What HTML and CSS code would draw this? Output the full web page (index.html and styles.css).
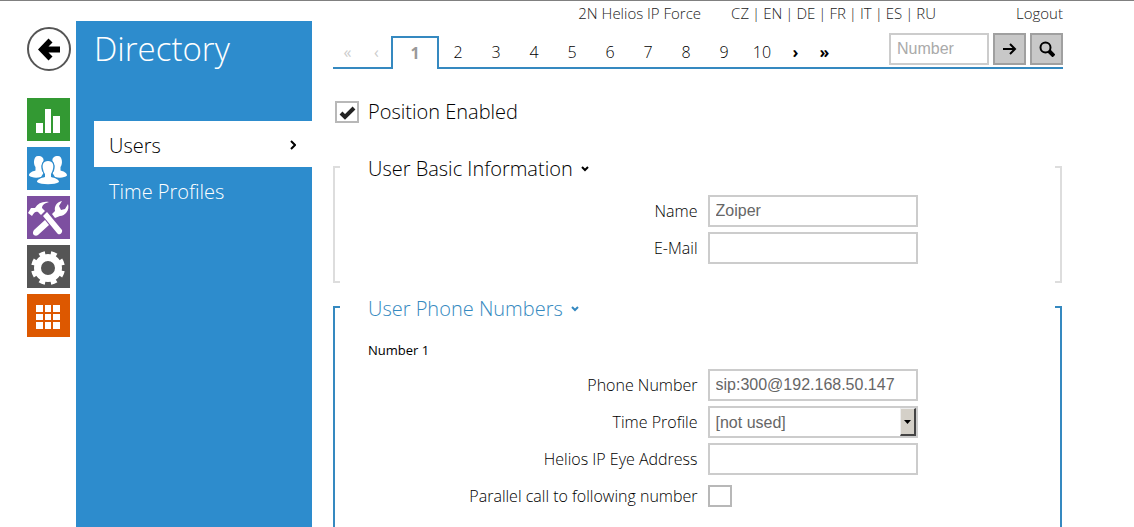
FILE: index.html
```
<!DOCTYPE html>
<html lang="en">
<head>
    <meta charset="UTF-8">
    <meta name="viewport" content="width=device-width, initial-scale=1.0">
    <title>2N Helios IP Force - Directory</title>
    <link rel="stylesheet" href="styles.css">
</head>
<body>
    <!-- Icon rail -->
    <nav class="rail" aria-label="Sections">
        <a class="back" href="#" aria-label="Back">
            <svg viewBox="0 0 44 44"><circle cx="22" cy="22" r="21" fill="#fff" stroke="#555" stroke-width="2"/><path d="M11 22.500 21.500 11.500 25.500 15.500 21.500 19.500H33V25.500H21.500L25.500 29.500 21.500 33.500Z"/></svg>
        </a>
        <a class="tile green" href="#" aria-label="Status">
            <svg viewBox="0 0 43 43"><path d="M9 25h7v10H9zM18 11h6v24h-6zM26 18h7v17h-7z"/></svg>
        </a>
        <a class="tile blue" href="#" aria-label="Directory">
            <svg viewBox="0 0 43 43">
                <path d="M11 9C15 9 17 11 16.500 14C14 17 14 20 15 24L16.500 26L14 30C9 31.500 4 30.500 2 28.500C2 26 5 24.500 8.500 23.500V20C6 17 6.500 9 11 9Z"/>
                <path d="M31 9C27 9 25 11 25.500 14C28 17 28 20 27 24L25.500 26L28 30C33 31.500 38 30.500 40 28.500C40 26 37 24.500 33.500 23.500V20C36 17 35.500 9 31 9Z"/>
                <path class="front" d="M21 14C26 14 27 18 26 22C25.500 24 24.500 26 24 27V30C28 31 32 32.500 32 35C28 38 14 38 10 35C10 32.500 14 31 18 30V27C17 26 16.500 24 16 22C15 18 16 14 21 14Z"/>
            </svg>
        </a>
        <a class="tile purple" href="#" aria-label="Hardware">
            <svg viewBox="0 0 43 43">
                <path d="M1 17 4 12H8C11 7 16 5 22 6C18 7 15 9 15 12L18 15L14 19L11 16C9 15 7 16 5 20Z"/>
                <path d="M16 20 20 16 35 34C36 37 32 40 30 37Z"/>
                <path d="M25 18 28 15C27 10 30 6 35 5L32 10L34 14L38 13L41 8C43 14 38 20 33 20L28 22ZM18 24 22 29 11 39C8 41 4 38 7 34Z"/>
            </svg>
        </a>
        <a class="tile gray" href="#" aria-label="Services">
            <svg viewBox="0 0 43 43" fill="none" stroke="#fff">
                <circle cx="21" cy="23" r="10.500" stroke-width="7"/>
                <circle cx="21" cy="23" r="15" stroke-width="4" pathLength="80" stroke-dasharray="5 5" stroke-dashoffset="-2.500"/>
            </svg>
        </a>
        <a class="tile orange" href="#" aria-label="System">
            <svg viewBox="0 0 43 43"><path d="M9 11h7v7H9zM18 11h6v7h-6zM26 11h7v7h-7zM9 20h7v6H9zM18 20h6v6h-6zM26 20h7v6h-7zM9 28h7v7H9zM18 28h6v7h-6zM26 28h7v7h-7z"/></svg>
        </a>
    </nav>

    <!-- Directory menu -->
    <aside class="sidebar">
        <h1>Directory</h1>
        <a class="menu-item active" href="#">Users
            <svg class="arrow" viewBox="0 0 6 10"><path d="M1 1 5 5 1 9"/></svg>
        </a>
        <a class="menu-item" href="#">Time Profiles</a>
    </aside>

    <main>
        <header class="topbar">
            <span>2N Helios IP Force</span>
            <span class="languages"><a href="#">CZ</a>|<a href="#">EN</a>|<a href="#">DE</a>|<a href="#">FR</a>|<a href="#">IT</a>|<a href="#">ES</a>|<a href="#">RU</a></span>
            <a href="#">Logout</a>
        </header>

        <div class="pager">
            <nav class="pages" aria-label="Positions">
                <a class="step off" href="#">«</a>
                <a class="step off" href="#">‹</a>
                <a class="current" href="#">1</a>
                <a href="#">2</a>
                <a href="#">3</a>
                <a href="#">4</a>
                <a href="#">5</a>
                <a href="#">6</a>
                <a href="#">7</a>
                <a href="#">8</a>
                <a href="#">9</a>
                <a href="#">10</a>
                <a class="step" href="#">›</a>
                <a class="step" href="#">»</a>
            </nav>
            <form class="search">
                <input type="text" placeholder="Number" aria-label="Number">
                <button type="button" aria-label="Go">
                    <svg viewBox="0 0 16 16"><path d="M1 8h12M8 3l5 5-5 5"/></svg>
                </button>
                <button type="button" aria-label="Search">
                    <svg viewBox="0 0 16 16"><circle cx="6.500" cy="6.500" r="5"/><path d="M10 10l5 5" stroke-width="4"/></svg>
                </button>
            </form>
        </div>

        <label class="enabled"><input type="checkbox" checked>Position Enabled</label>

        <section class="group">
            <h2><button type="button">User Basic Information <svg viewBox="0 0 8 6"><path d="M1 1 4 4 7 1"/></svg></button></h2>
            <div class="row">
                <label for="name">Name</label>
                <input type="text" id="name" value="Zoiper">
            </div>
            <div class="row">
                <label for="email">E-Mail</label>
                <input type="text" id="email">
            </div>
        </section>

        <section class="group open">
            <h2><button type="button">User Phone Numbers <svg viewBox="0 0 8 6"><path d="M1 1 4 4 7 1"/></svg></button></h2>
            <h3>Number 1</h3>
            <div class="row">
                <label for="phone">Phone Number</label>
                <input type="text" id="phone" value="sip:300@192.168.50.147">
            </div>
            <div class="row">
                <label for="profile">Time Profile</label>
                <span class="select">
                    <select id="profile"><option>[not used]</option></select>
                    <span class="drop"><svg viewBox="0 0 7 4"><path d="M0 0h7L3.500 4z"/></svg></span>
                </span>
            </div>
            <div class="row">
                <label for="eye">Helios IP Eye Address</label>
                <input type="text" id="eye">
            </div>
            <div class="row">
                <label for="parallel">Parallel call to following number</label>
                <input type="checkbox" id="parallel">
            </div>
        </section>
    </main>
</body>
</html>
```
FILE: styles.css
```
* {
    box-sizing: border-box;
}

body {
    margin: 0;
    min-height: 100vh;
    display: flex;
    border-top: 1px solid #808080;
    background: #fff;
    color: #000;
    font-family: "Open Sans", "Noto Sans", sans-serif;
    font-size: 16px;
    font-weight: 300;
}

a {
    color: inherit;
    text-decoration: none;
}

svg {
    display: block;
}

/* Icon rail */
.rail {
    flex: none;
    width: 76px;
    padding: 26px 5px 0 27px;
    display: flex;
    flex-direction: column;
    gap: 6px;
}

.back {
    width: 44px;
    height: 44px;
    margin-bottom: 21px;
}

.tile {
    width: 43px;
    height: 43px;
    fill: #fff;
}

.front {
    stroke: #2d8ccd;
    stroke-width: 2;
    paint-order: stroke;
}

.green {
    background: #339933;
}

.blue {
    background: #2d8ccd;
}

.purple {
    background: #7d4fa0;
}

.gray {
    background: #555;
}

.orange {
    background: #dd5800;
}

/* Directory menu */
.sidebar {
    flex: none;
    width: 236px;
    margin-top: 20px;
    padding-left: 18px;
    background: #2d8ccd;
    color: #fff;
}

h1 {
    margin: 0 0 44px;
    font-size: 33px;
    font-weight: 300;
    line-height: 56px;
}

.menu-item {
    display: flex;
    align-items: center;
    justify-content: space-between;
    height: 46px;
    padding: 2px 16px 0 15px;
    font-size: 20px;
}

.menu-item.active {
    background: #fff;
    color: #000;
}

.arrow {
    width: 6px;
    height: 10px;
    fill: none;
    stroke: #000;
    stroke-width: 2;
}

/* Main column */
main {
    flex: 1;
    display: flex;
    flex-direction: column;
    margin: 0 71px 0 21px;
}

.topbar {
    display: flex;
    justify-content: flex-end;
    height: 32px;
    font-size: 15px;
    line-height: 24px;
    color: #222;
}

.languages {
    display: flex;
    gap: 3px;
    margin: 0 80px 0 30px;
}

/* Pager */
.pager {
    display: flex;
    justify-content: space-between;
    height: 36px;
    border-bottom: 2px solid #3589c0;
}

.pages {
    display: flex;
    height: 33px;
    margin-top: 3px;
    line-height: 32px;
    text-align: center;
}

.pages a {
    width: 38px;
}

.pages .step {
    width: 29px;
    font-weight: 700;
}

.pages .off {
    color: #ccc;
    font-weight: 400;
}

.pages .current {
    width: 48px;
    height: 33px;
    border: 2px solid #3589c0;
    border-bottom: 0;
    background: #fff;
    color: #999;
    font-weight: 700;
    line-height: 30px;
}

.search {
    display: flex;
    gap: 4px;
}

.search button {
    width: 33px;
    height: 32px;
    padding: 0 7px;
    border: 2px solid #a0a0a0;
    background: #c8c8c8;
}

.search svg {
    width: 16px;
    height: 16px;
    fill: none;
    stroke: #000;
    stroke-width: 2;
}

/* Form controls */
input[type="text"],
select {
    width: 210px;
    height: 32px;
    margin: 0;
    padding: 0 6px;
    border: 2px solid #ccc;
    border-radius: 0;
    background: #fff;
    color: #666;
    font-family: "Liberation Sans", Arial, sans-serif;
    font-size: 16px;
}

.search input[type="text"] {
    width: 100px;
}

input::placeholder {
    color: #aaa;
}

input[type="checkbox"] {
    appearance: none;
    width: 24px;
    height: 22px;
    margin: 0;
    border: 2px solid #b8b8b8;
    background: #fff;
}

input[type="checkbox"]:checked {
    background: url("data:image/svg+xml,%3Csvg xmlns='http://www.w3.org/2000/svg' viewBox='0 0 20 18'%3E%3Cpath d='M4 10l4 4 9-9' fill='none' stroke='%23222' stroke-width='4'/%3E%3C/svg%3E") center no-repeat;
}

.enabled {
    display: flex;
    align-items: center;
    gap: 9px;
    margin: 28px 0 39px 2px;
    font-size: 20px;
    line-height: 30px;
}

/* Bracketed groups */
.group {
    --line: #ddd;
    margin: 0 1px 23px 0;
    padding-bottom: 14px;
    border: solid var(--line);
    border-width: 0 2px;
    background:
        linear-gradient(var(--line), var(--line)) left top / 5px 2px,
        linear-gradient(var(--line), var(--line)) right top / 5px 2px,
        linear-gradient(var(--line), var(--line)) left bottom / 5px 2px,
        linear-gradient(var(--line), var(--line)) right bottom / 5px 2px;
    background-repeat: no-repeat;
}

.group.open {
    --line: #3589c0;
    flex: 1;
    margin-bottom: 0;
    padding-bottom: 8px;
    background:
        linear-gradient(var(--line), var(--line)) left top / 5px 2px,
        linear-gradient(var(--line), var(--line)) right top / 5px 2px;
    background-repeat: no-repeat;
}

h2 {
    margin: -12px 0 11px 33px;
    font-size: 20px;
    font-weight: 300;
    line-height: 30px;
}

h2 button {
    display: flex;
    align-items: center;
    gap: 8px;
    padding: 0;
    border: 0;
    background: none;
    color: inherit;
    font: inherit;
}

.open h2 {
    color: #3589c0;
}

h2 svg {
    width: 8px;
    height: 6px;
    fill: none;
    stroke: currentColor;
    stroke-width: 2;
}

h3 {
    margin: 14px 0 7px 33px;
    font-size: 13px;
    font-weight: 400;
    line-height: 24px;
}

.row {
    display: flex;
    align-items: center;
    gap: 10px;
    min-height: 32px;
    margin-bottom: 5px;
}

.row label {
    width: 50%;
    text-align: right;
}

/* Time profile drop-down */
.select {
    position: relative;
}

select {
    display: block;
    appearance: none;
}

.drop {
    position: absolute;
    top: 2px;
    right: 2px;
    display: flex;
    align-items: center;
    justify-content: center;
    width: 16px;
    height: 28px;
    border: 1px solid #eee;
    border-right: 2px solid #444;
    border-bottom: 2px solid #444;
    background: #d4d0c8;
    pointer-events: none;
}

.drop svg {
    width: 7px;
    height: 4px;
}
```
